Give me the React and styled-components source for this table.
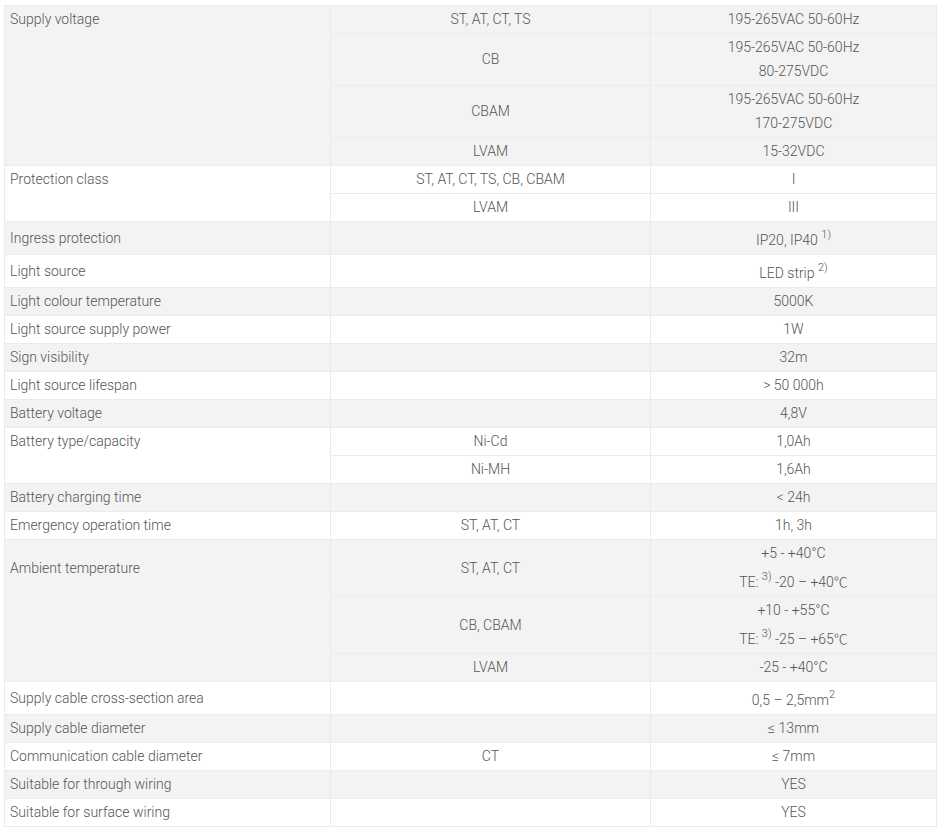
import React from "react";
import styled, { createGlobalStyle } from "styled-components";

const Global = createGlobalStyle`
  html, body { margin: 0; padding: 0; background: #fff; }
  body { font-family: Roboto, "Noto Sans", "Liberation Sans", sans-serif; }
`;

const Wrap = styled.div`
  padding: 5px 4px;
`;

const Table = styled.table`
  width: 932px;
  border-collapse: collapse;
  table-layout: fixed;
  font-family: Roboto, "Noto Sans CJK SC", "Liberation Sans", sans-serif;
  font-weight: 300;
  font-size: 14px;
  line-height: 24px;
  color: #555;
  border: 1px solid #ebebeb;
`;

const Row = styled.tr`
  background: ${(p) => (p.$shade ? "#f3f3f3" : "#fff")};
`;

const Cell = styled.td`
  border: 1px solid #ebebeb;
  padding: 1px 6px 2px;
  text-align: center;
  vertical-align: middle;
`;

const LabelCell = styled(Cell)`
  text-align: left;
  padding-left: 5px;
  border-top-style: ${(p) => (p.$first ? "solid" : "none")};
  border-bottom-style: ${(p) => (p.$last ? "solid" : "none")};
`;

const Sup = styled.sup`
  font-size: 11px;
  line-height: 24px;
  vertical-align: 7px;
`;

const Line = styled.div``;

const groups = [
  {
    label: "Supply voltage",
    rows: [
      ["ST, AT, CT, TS", "195-265VAC 50-60Hz"],
      ["CB", <><Line>195-265VAC 50-60Hz</Line><Line>80-275VDC</Line></>],
      ["CBAM", <><Line>195-265VAC 50-60Hz</Line><Line>170-275VDC</Line></>],
      ["LVAM", "15-32VDC"],
    ],
  },
  {
    label: "Protection class",
    rows: [
      ["ST, AT, CT, TS, CB, CBAM", "I"],
      ["LVAM", "III"],
    ],
  },
  { label: "Ingress protection", rows: [["", <>IP20, IP40 <Sup>1)</Sup></>]] },
  { label: "Light source", rows: [["", <>LED strip <Sup>2)</Sup></>]] },
  { label: "Light colour temperature", rows: [["", "5000K"]] },
  { label: "Light source supply power", rows: [["", "1W"]] },
  { label: "Sign visibility", rows: [["", "32m"]] },
  { label: "Light source lifespan", rows: [["", "> 50 000h"]] },
  { label: "Battery voltage", rows: [["", "4,8V"]] },
  {
    label: "Battery type/capacity",
    rows: [
      ["Ni-Cd", "1,0Ah"],
      ["Ni-MH", "1,6Ah"],
    ],
  },
  { label: "Battery charging time", rows: [["", "< 24h"]] },
  { label: "Emergency operation time", rows: [["ST, AT, CT", "1h, 3h"]] },
  {
    label: "Ambient temperature",
    rows: [
      ["ST, AT, CT", <><Line>+5 - +40°C</Line><Line>TE: <Sup>3)</Sup> -20 – +40℃</Line></>],
      ["CB, CBAM", <><Line>+10 - +55°C</Line><Line>TE: <Sup>3)</Sup> -25 – +65℃</Line></>],
      ["LVAM", "-25 - +40°C"],
    ],
  },
  { label: "Supply cable cross-section area", rows: [["", <>0,5 – 2,5mm<Sup>2</Sup></>]] },
  { label: "Supply cable diameter", rows: [["", "≤ 13mm"]] },
  { label: "Communication cable diameter", rows: [["CT", "≤ 7mm"]] },
  { label: "Suitable for through wiring", rows: [["", "YES"]] },
  { label: "Suitable for surface wiring", rows: [["", "YES"]] },
];

export default function App() {
  return (
    <Wrap>
      <Global />
      <Table>
        <colgroup>
          <col style={{ width: 326 }} />
          <col style={{ width: 320 }} />
          <col style={{ width: 286 }} />
        </colgroup>
        <tbody>
          {groups.map((g, gi) =>
            g.rows.map((r, ri) => (
              <Row key={`${gi}-${ri}`} $shade={gi % 2 === 0}>
                <LabelCell $first={ri === 0} $last={ri === g.rows.length - 1}>
                  {ri === 0 ? g.label : ""}
                </LabelCell>
                <Cell>{r[0]}</Cell>
                <Cell>{r[1]}</Cell>
              </Row>
            ))
          )}
        </tbody>
      </Table>
    </Wrap>
  );
}
